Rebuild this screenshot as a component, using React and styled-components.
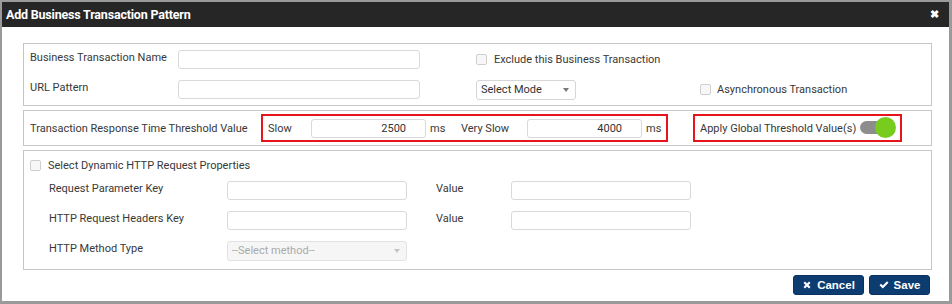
import React from 'react';
import styled, { createGlobalStyle } from 'styled-components';

const Global = createGlobalStyle`
  html, body { margin: 0; padding: 0; background: #fff; }
  body { font-family: Roboto, "Liberation Sans", Arial, sans-serif; font-size: 11px; color: #383838; }
  * { box-sizing: border-box; }
`;

const Window = styled.div`
  width: 952px;
  height: 304px;
  border: 2px solid #9a9a9a;
  border-bottom-width: 3px;
  border-right-width: 3px;
  background: #fff;
  display: flex;
  flex-direction: column;
`;

const TitleBar = styled.div`
  height: 25px;
  background: #262626;
  color: #fff;
  display: flex;
  align-items: center;
  justify-content: space-between;
  padding: 0 10px 0 4px;
  font-weight: 700;
  font-size: 12.5px;
  letter-spacing: -0.2px;
`;

const Close = styled.span`
  font-size: 11px;
  font-weight: 900;
  line-height: 1;
`;

const Body = styled.div`
  padding: 16px 17px 0 21px;
  display: flex;
  flex-direction: column;
  gap: 4px;
`;

const Panel = styled.div`
  border: 1px solid #c6c6c6;
  padding: ${p => p.$pad || '0'};
`;

const TopGrid = styled.div`
  display: grid;
  grid-template-columns: 148px 242px 56px 224px 1fr;
  grid-auto-rows: 19px;
  row-gap: 11px;
  align-items: center;
`;

const Label = styled.span`
  white-space: nowrap;
  align-self: ${p => p.$top ? 'start' : 'center'};
  padding-top: ${p => p.$top ? '1px' : '0'};
`;

const Input = styled.input`
  width: ${p => p.$w || '100%'};
  height: ${p => p.$h || '19px'};
  border: 1px solid #d9d9d9;
  border-radius: 3px;
  background: #fff;
  font: inherit;
  color: #333;
  padding: 0 ${p => p.$right ? '19px' : '6px'} 0 6px;
  text-align: ${p => p.$right ? 'right' : 'left'};
  outline: none;
`;

const Check = styled.span`
  display: inline-block;
  width: 11px;
  height: 11px;
  border: 1px solid #cfcfcf;
  border-radius: 2px;
  background: #f7f7f7;
  flex: none;
`;

const CheckRow = styled.label`
  display: flex;
  align-items: center;
  gap: ${p => p.$gap || '7px'};
  white-space: nowrap;
`;

const Select = styled.div`
  width: ${p => p.$w};
  height: ${p => p.$h || '20px'};
  border: 1px solid ${p => p.$disabled ? '#e2e2e2' : '#d6d6d6'};
  border-radius: 3px;
  background: ${p => p.$disabled ? '#f6f6f6' : '#fff'};
  color: ${p => p.$disabled ? '#aaa' : '#333'};
  display: flex;
  align-items: center;
  justify-content: space-between;
  padding: 0 6px 0 4px;
`;

const Caret = styled.span`
  width: 0;
  height: 0;
  border-left: 3px solid transparent;
  border-right: 3px solid transparent;
  border-top: 4px solid ${p => p.$light ? '#c3c3c3' : '#777'};
`;

const ThresholdRow = styled.div`
  display: flex;
  align-items: center;
  height: 34px;
  padding-left: 6px;
`;

const RedBox = styled.div`
  border: 2px solid #e8141b;
  height: 28px;
  display: flex;
  align-items: center;
  padding-left: 5px;
  width: ${p => p.$w};
  margin-left: ${p => p.$ml || '0'};
`;

const Field = styled.span`
  width: ${p => p.$w};
  flex: none;
  white-space: nowrap;
`;

const Unit = styled.span`
  margin-left: 4px;
  width: ${p => p.$w || 'auto'};
  flex: none;
`;

const Toggle = styled.span`
  position: relative;
  margin-left: 4px;
  width: 36px;
  height: 22px;
  display: inline-block;
  &::before {
    content: '';
    position: absolute;
    left: 0;
    top: 4px;
    width: 30px;
    height: 13px;
    border-radius: 7px;
    background: #8d8d8d;
  }
  &::after {
    content: '';
    position: absolute;
    right: 0;
    top: 0;
    width: 21px;
    height: 21px;
    border-radius: 50%;
    background: #77cc1e;
  }
`;

const DynGrid = styled.div`
  display: grid;
  grid-template-columns: 178px 180px 29px 75px 180px;
  grid-auto-rows: 19px;
  row-gap: 11px;
  align-items: center;
  padding: 9px 0 0 19px;
`;

const Footer = styled.div`
  display: flex;
  justify-content: flex-end;
  gap: 5px;
  padding-top: 1px;
  padding-right: 2px;
`;

const Button = styled.button`
  height: 20px;
  width: ${p => p.$w};
  background: #0d3c71;
  color: #fff;
  border: 1px solid #0a3163;
  border-radius: 3px;
  font-family: "Liberation Sans", Arial, sans-serif;
  font-weight: 700;
  font-size: 11.5px;
  display: flex;
  align-items: center;
  justify-content: center;
  gap: 5px;
  padding: 0;
`;

const Icon = styled.svg`
  width: 10px;
  height: 10px;
  fill: #fff;
`;

export default function App() {
  return (
    <>
      <Global />
      <Window>
        <TitleBar>
          <span>Add Business Transaction Pattern</span>
          <Close>✖</Close>
        </TitleBar>
        <Body>
          <Panel $pad="6px 0 6px 6px">
            <TopGrid>
              <Label $top>Business Transaction Name</Label>
              <Input />
              <span />
              <CheckRow style={{ gridColumn: '4 / 6' }}>
                <Check />
                <span>Exclude this Business Transaction</span>
              </CheckRow>
              <Label $top>URL Pattern</Label>
              <Input />
              <span />
              <Select $w="100px">
                <span>Select Mode</span>
                <Caret />
              </Select>
              <CheckRow $gap="6px">
                <Check />
                <span>Asynchronous Transaction</span>
              </CheckRow>
            </TopGrid>
          </Panel>
          <Panel>
            <ThresholdRow>
              <Field $w="231px">Transaction Response Time Threshold Value</Field>
              <RedBox $w="407px">
                <Field $w="43px">Slow</Field>
                <Input $w="115px" $right defaultValue="2500" />
                <Unit $w="31px">ms</Unit>
                <Field $w="66px">Very Slow</Field>
                <Input $w="115px" $right defaultValue="4000" />
                <Unit>ms</Unit>
              </RedBox>
              <RedBox $w="209px" $ml="25px">
                <Field>Apply Global Threshold Value(s)</Field>
                <Toggle />
              </RedBox>
            </ThresholdRow>
          </Panel>
          <Panel $pad="8px 0 9px 6px">
            <CheckRow $gap="7px">
              <Check />
              <span>Select Dynamic HTTP Request Properties</span>
            </CheckRow>
            <DynGrid>
              <Label $top>Request Parameter Key</Label>
              <Input />
              <span />
              <Label $top>Value</Label>
              <Input />
              <Label $top>HTTP Request Headers Key</Label>
              <Input />
              <span />
              <Label $top>Value</Label>
              <Input />
              <Label $top>HTTP Method Type</Label>
              <Select $w="180px" $disabled>
                <span>--Select method--</span>
                <Caret $light />
              </Select>
            </DynGrid>
          </Panel>
          <Footer>
            <Button $w="71px">
              <Icon viewBox="0 0 10 10">
                <path d="M1.5 3 L3 1.5 L5 3.5 L7 1.5 L8.5 3 L6.5 5 L8.5 7 L7 8.5 L5 6.5 L3 8.5 L1.5 7 L3.5 5 Z" />
              </Icon>
              Cancel
            </Button>
            <Button $w="61px">
              <Icon viewBox="0 0 10 10">
                <path d="M0.5 5.2 L2 3.7 L3.8 5.5 L8 1.3 L9.5 2.8 L3.8 8.5 Z" />
              </Icon>
              Save
            </Button>
          </Footer>
        </Body>
      </Window>
    </>
  );
}
